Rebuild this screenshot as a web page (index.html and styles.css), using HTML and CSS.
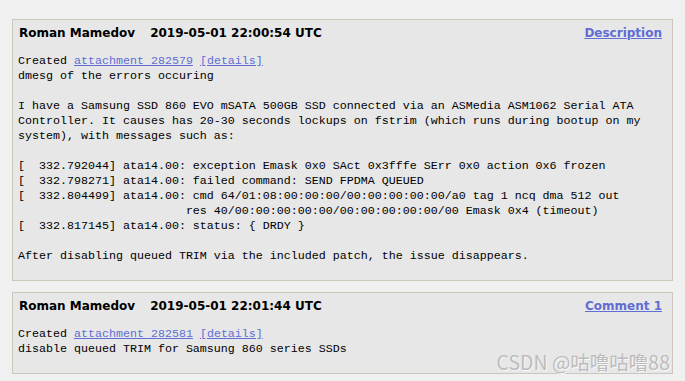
FILE: index.html
```html
<!DOCTYPE html>
<html>
<head>
<meta charset="utf-8">
<link rel="stylesheet" href="styles.css">
</head>
<body>
<div class="page">
  <div class="comment">
    <div class="head">
      <span class="who"><span class="author">Roman Mamedov</span><span class="time">2019-05-01 22:00:54 UTC</span></span>
      <a class="num" href="#">Description</a>
    </div>
<pre class="text">Created <a href="#">attachment 282579</a> <a href="#">[details]</a>
dmesg of the errors occuring

I have a Samsung SSD 860 EVO mSATA 500GB SSD connected via an ASMedia ASM1062 Serial ATA
Controller. It causes has 20-30 seconds lockups on fstrim (which runs during bootup on my
system), with messages such as:

[  332.792044] ata14.00: exception Emask 0x0 SAct 0x3fffe SErr 0x0 action 0x6 frozen
[  332.798271] ata14.00: failed command: SEND FPDMA QUEUED
[  332.804499] ata14.00: cmd 64/01:08:00:00:00/00:00:00:00:00/a0 tag 1 ncq dma 512 out
                        res 40/00:00:00:00:00/00:00:00:00:00/00 Emask 0x4 (timeout)
[  332.817145] ata14.00: status: { DRDY }

After disabling queued TRIM via the included patch, the issue disappears.</pre>
  </div>
  <div class="comment">
    <div class="head">
      <span class="who"><span class="author">Roman Mamedov</span><span class="time">2019-05-01 22:01:44 UTC</span></span>
      <a class="num" href="#">Comment 1</a>
    </div>
<pre class="text">Created <a href="#">attachment 282581</a> <a href="#">[details]</a>
disable queued TRIM for Samsung 860 series SSDs</pre>
  </div>
  <div class="watermark">CSDN @咕噜咕噜88</div>
</div>
</body>
</html>
```
FILE: styles.css
```css
html, body {
  margin: 0;
  padding: 0;
  background: #f0f0f0;
}
.page {
  position: relative;
  padding: 19px 12px 0 12px;
}
.comment {
  background: #e7e7e7;
  border: 1px solid #c8c8bc;
  padding: 5px 10px 16px 6px;
  margin-bottom: 11px;
}
.head {
  display: flex;
  justify-content: space-between;
  align-items: baseline;
  font-family: "DejaVu Sans", Verdana, sans-serif;
  font-weight: bold;
  font-size: 12px;
  line-height: 16px;
  color: #000;
}
.author {
  margin-right: 15px;
}
.num {
  color: #5f6dd4;
  text-decoration: underline;
}
.text {
  margin: 13px 0 0 -1px;
  font-family: "Liberation Mono", "DejaVu Sans Mono", monospace;
  font-size: 11.67px;
  line-height: 15px;
  color: #000;
  white-space: pre;
}
.text a {
  color: #5f6dd4;
  text-decoration: underline;
}
.watermark {
  position: absolute;
  right: 15px;
  top: 348px;
  font-family: "Noto Sans CJK SC", sans-serif;
  font-size: 19.5px;
  line-height: 28px;
  color: #bcbcbc;
  text-shadow: 1px 1px 0 #f8f8f8;
}
```
